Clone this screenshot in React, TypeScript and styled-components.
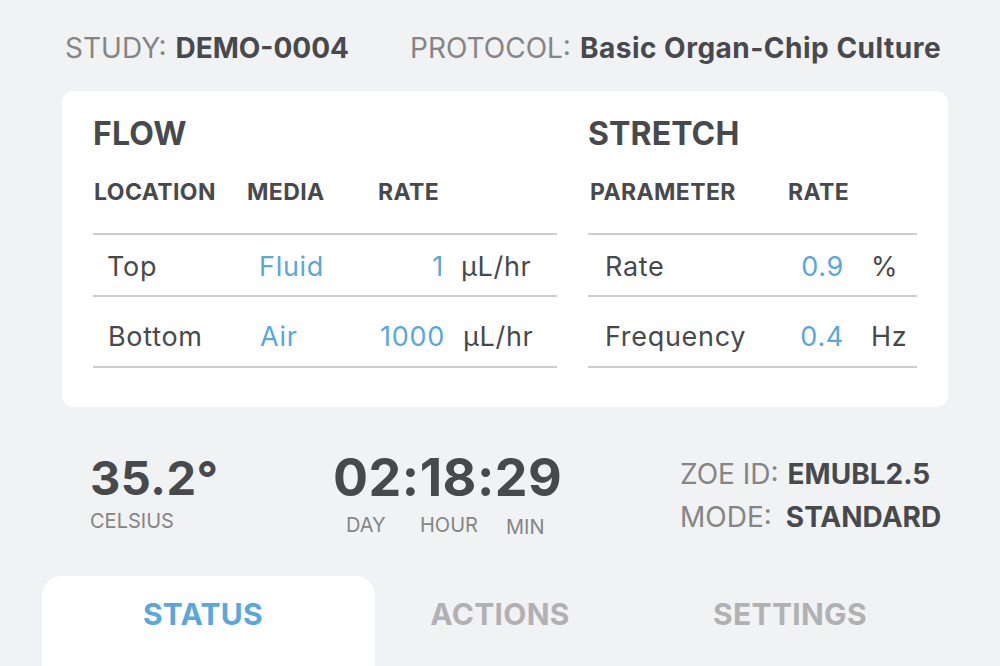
import React from "react";
import styled, { createGlobalStyle } from "styled-components";

const Global = createGlobalStyle`
  html, body { margin: 0; padding: 0; background: #f1f2f4; }
  body { font-family: Inter, "Noto Sans", Roboto, sans-serif; color: #48494d; }
`;

const Page = styled.div`
  width: 1000px;
  height: 666px;
  overflow: hidden;
  display: flex;
  flex-direction: column;
  background: #f1f2f4;
`;

const Header = styled.div`
  display: flex;
  align-items: center;
  padding: 30px 0 0 65px;
  height: 36px;
  gap: 61px;
  font-size: 28px;
  line-height: 36px;
`;

const Field = styled.div<{ $gap?: number }>`
  display: flex;
  gap: ${(p) => p.$gap ?? 9}px;
  white-space: nowrap;
`;

const Label = styled.span`
  color: #858585;
  font-weight: 400;
`;

const Value = styled.span<{ $ls?: number }>`
  color: #48494d;
  font-weight: 700;
  letter-spacing: ${(p) => p.$ls ?? 0}px;
`;

const Card = styled.div`
  margin: 25px 52px 0 62px;
  height: 316px;
  box-sizing: border-box;
  background: #fff;
  border-radius: 12px;
  padding: 18px 31px 0 31px;
  display: flex;
  gap: 31px;
`;

const Section = styled.div<{ $w: number }>`
  width: ${(p) => p.$w}px;
  display: flex;
  flex-direction: column;
`;

const Title = styled.div`
  font-size: 32px;
  font-weight: 700;
  line-height: 50px;
  letter-spacing: 0.1px;
`;

const HeadRow = styled.div<{ $cols: string; $pl: number }>`
  display: grid;
  grid-template-columns: ${(p) => p.$cols};
  padding-left: ${(p) => p.$pl}px;
  font-size: 23px;
  font-weight: 700;
  line-height: 30px;
  margin-top: 18px;
  height: 56px;
  border-bottom: 2px solid #cdcdcd;
  letter-spacing: 0.4px;
`;

const Row = styled.div<{ $cols: string; $pl: number; $h: number; $pt: number }>`
  display: grid;
  grid-template-columns: ${(p) => p.$cols};
  padding-left: ${(p) => p.$pl}px;
  padding-top: ${(p) => p.$pt}px;
  box-sizing: border-box;
  align-items: center;
  height: ${(p) => p.$h}px;
  border-bottom: 2px solid #cdcdcd;
  font-size: 27px;
  line-height: 32px;
  letter-spacing: 0.7px;
`;

const Cell = styled.span<{ $blue?: boolean; $right?: boolean; $pl?: number }>`
  color: ${(p) => (p.$blue ? "#5aa7db" : "#48494d")};
  text-align: ${(p) => (p.$right ? "right" : "left")};
  padding-left: ${(p) => p.$pl ?? 0}px;
  white-space: nowrap;
`;

const Stats = styled.div`
  display: flex;
  align-items: flex-start;
  padding: 41px 0 0 90px;
  height: 169px;
  box-sizing: border-box;
`;

const Stat = styled.div<{ $w: number }>`
  width: ${(p) => p.$w}px;
  display: flex;
  flex-direction: column;
`;

const BigNum = styled.div<{ $size: number }>`
  font-size: ${(p) => p.$size}px;
  font-weight: 700;
  line-height: 60px;
  letter-spacing: 0.5px;
  white-space: nowrap;
`;

const SubLabel = styled.div`
  color: #858585;
  font-size: 20px;
  line-height: 26px;
  margin-top: 0;
`;

const Units = styled.div`
  display: flex;
  color: #858585;
  font-size: 20px;
  line-height: 26px;
  margin-top: 4px;
`;

const Unit = styled.span<{ $w: number; $dy?: number; $ml?: number }>`
  width: ${(p) => p.$w}px;
  margin-left: ${(p) => p.$ml ?? 0}px;
  position: relative;
  top: ${(p) => p.$dy ?? 0}px;
`;

const Meta = styled.div`
  display: flex;
  flex-direction: column;
  gap: 7px;
  font-size: 28px;
  line-height: 36px;
  margin-top: 8px;
`;

const Tabs = styled.div`
  display: flex;
  padding-left: 42px;
  flex: 1;
`;

const Tab = styled.div<{ $active?: boolean; $w: number; $pr?: number }>`
  width: ${(p) => p.$w}px;
  box-sizing: border-box;
  padding-right: ${(p) => p.$pr ?? 0}px;
  background: ${(p) => (p.$active ? "#fff" : "transparent")};
  border-radius: 20px 20px 0 0;
  color: ${(p) => (p.$active ? "#5aa7db" : "#b1b1b3")};
  font-size: 30px;
  font-weight: 700;
  text-align: center;
  padding-top: 18px;
  line-height: 40px;
  letter-spacing: 0.3px;
`;

const flowCols = "153px 131px 1fr";
const flowRowCols = "152px 104px 81px 1fr";
const strCols = "198px 1fr";
const strRowCols = "160px 79px 1fr";

export default function App() {
  return (
    <Page>
      <Global />
      <Header>
        <Field>
          <Label>STUDY:</Label>
          <Value>DEMO-0004</Value>
        </Field>
        <Field $gap={9}>
          <Label>PROTOCOL:</Label>
          <Value $ls={0.5}>Basic Organ-Chip Culture</Value>
        </Field>
      </Header>
      <Card>
        <Section $w={464}>
          <Title>FLOW</Title>
          <HeadRow $cols={flowCols} $pl={1}>
            <span>LOCATION</span>
            <span>MEDIA</span>
            <span>RATE</span>
          </HeadRow>
          <Row $cols={flowRowCols} $pl={14} $h={62} $pt={3}>
            <Cell>Top</Cell>
            <Cell $blue>Fluid</Cell>
            <Cell $blue $right>1</Cell>
            <Cell $pl={17}>μL/hr</Cell>
          </Row>
          <Row $cols={flowRowCols} $pl={15} $h={71} $pt={10}>
            <Cell>Bottom</Cell>
            <Cell $blue>Air</Cell>
            <Cell $blue $right>1000</Cell>
            <Cell $pl={18}>μL/hr</Cell>
          </Row>
        </Section>
        <Section $w={329}>
          <Title>STRETCH</Title>
          <HeadRow $cols={strCols} $pl={2}>
            <span>PARAMETER</span>
            <span>RATE</span>
          </HeadRow>
          <Row $cols={strRowCols} $pl={17} $h={62} $pt={3}>
            <Cell>Rate</Cell>
            <Cell $blue $right>0.9</Cell>
            <Cell $pl={27}>%</Cell>
          </Row>
          <Row $cols={strRowCols} $pl={17} $h={71} $pt={10}>
            <Cell>Frequency</Cell>
            <Cell $blue $right>0.4</Cell>
            <Cell $pl={27}>Hz</Cell>
          </Row>
        </Section>
      </Card>
      <Stats>
        <Stat $w={243}>
          <BigNum $size={47}>35.2°</BigNum>
          <SubLabel>CELSIUS</SubLabel>
        </Stat>
        <Stat $w={347}>
          <BigNum $size={52}>02:18:29</BigNum>
          <Units>
            <Unit $w={74} $ml={13}>DAY</Unit>
            <Unit $w={86}>HOUR</Unit>
            <Unit $w={60} $dy={2}>MIN</Unit>
          </Units>
        </Stat>
        <Meta>
          <Field>
            <Label>ZOE ID:</Label>
            <Value>EMUBL2.5</Value>
          </Field>
          <Field $gap={14}>
            <Label>MODE:</Label>
            <Value>STANDARD</Value>
          </Field>
        </Meta>
      </Stats>
      <Tabs>
        <Tab $active $w={333} $pr={11}>STATUS</Tab>
        <Tab $w={250}>ACTIONS</Tab>
        <Tab $w={330}>SETTINGS</Tab>
      </Tabs>
    </Page>
  );
}
